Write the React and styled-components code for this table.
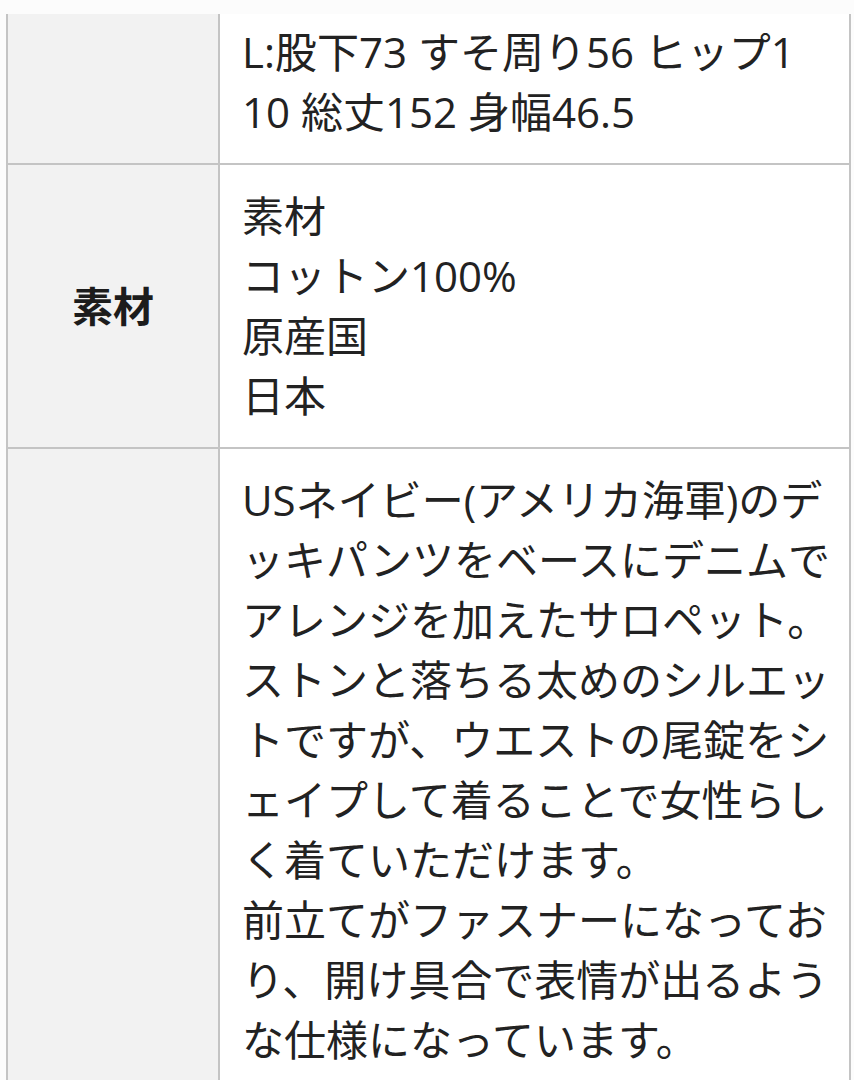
import React from 'react';
import styled, { createGlobalStyle } from 'styled-components';

const GlobalStyle = createGlobalStyle`
  html, body {
    margin: 0;
    padding: 0;
    background: #fcfcfc;
  }
  body {
    font-family: "Open Sans", "Noto Sans CJK JP", sans-serif;
    color: #1c1c1c;
  }
`;

const Page = styled.div`
  padding: 14px 3px 0 6px;
  height: 1080px;
  overflow: hidden;
  box-sizing: border-box;
`;

const Table = styled.div`
  display: grid;
  grid-template-columns: 212px 1fr;
  border-left: 2px solid #c4c4c4;
  border-right: 2px solid #c4c4c4;
  background: #fff;
`;

const Head = styled.div`
  background: #f2f2f2;
  border-right: 2px solid #c4c4c4;
  border-bottom: ${p => (p.last ? 'none' : '2px solid #c4c4c4')};
  display: flex;
  align-items: center;
  justify-content: center;
  font-weight: 700;
  font-size: 41px;
  line-height: 60px;
`;

const Cell = styled.div`
  background: #fff;
  border-bottom: ${p => (p.last ? 'none' : '2px solid #c4c4c4')};
  padding: ${p => (p.cut ? '8px' : '21px')} 16px ${p => (p.last ? '40px' : '21px')} 22px;
  font-size: 42px;
  line-height: 60px;
  color: #222;
`;

const Line = styled.div`
  white-space: nowrap;
`;

const rows = [
  {
    head: '',
    cut: true,
    lines: ['L:股下73 すそ周り56 ヒップ1', '10 総丈152 身幅46.5'],
  },
  {
    head: '素材',
    lines: ['素材', 'コットン100%', '原産国', '日本'],
  },
  {
    head: '',
    last: true,
    lines: [
      'USネイビー(アメリカ海軍)のデ',
      'ッキパンツをベースにデニムで',
      'アレンジを加えたサロペット。',
      'ストンと落ちる太めのシルエッ',
      'トですが、ウエストの尾錠をシ',
      'ェイプして着ることで女性らし',
      'く着ていただけます。',
      '前立てがファスナーになってお',
      'り、開け具合で表情が出るよう',
      'な仕様になっています。',
    ],
  },
];

export default function App() {
  return (
    <>
      <GlobalStyle />
      <Page>
        <Table>
          {rows.map((r, i) => (
            <React.Fragment key={i}>
              <Head last={r.last}>{r.head}</Head>
              <Cell cut={r.cut} last={r.last}>
                {r.lines.map((l, j) => (
                  <Line key={j}>{l}</Line>
                ))}
              </Cell>
            </React.Fragment>
          ))}
        </Table>
      </Page>
    </>
  );
}
